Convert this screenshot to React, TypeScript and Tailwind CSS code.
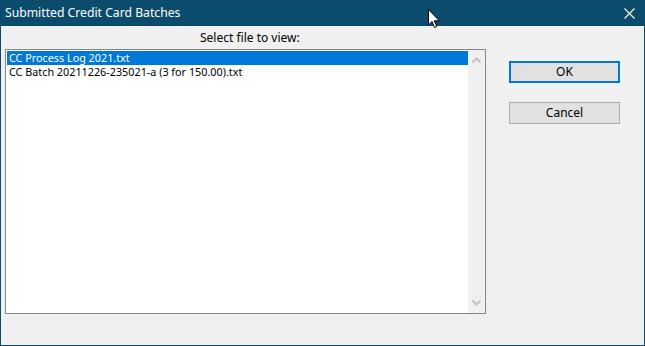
import React from "react";

const files = [
  "CC Process Log 2021.txt",
  "CC Batch 20211226-235021-a (3 for 150.00).txt",
];

function Chevron({ up }: { up?: boolean }) {
  return (
    <svg width="9" height="6" viewBox="0 0 9 6" className="block">
      <path
        d={up ? "M0.5 5.5 L4.5 1.5 L8.5 5.5" : "M0.5 0.5 L4.5 4.5 L8.5 0.5"}
        fill="none"
        stroke="#c2c2c2"
        strokeWidth="2"
      />
    </svg>
  );
}

export default function App() {
  const selected = 0;
  return (
    <div
      className="relative w-[645px] h-[346px] border border-[#0b4b6c] bg-[#f0f0f0] flex flex-col text-[12px] text-black overflow-hidden"
      style={{ fontFamily: '"Noto Sans", "Segoe UI", sans-serif' }}
    >
      {/* title bar */}
      <div className="h-[25px] shrink-0 bg-[#0b4b6c] flex items-center justify-between pl-[4px] pr-[9px] text-white">
        <span className="leading-none text-[12.2px]">Submitted Credit Card Batches</span>
        <svg width="11" height="11" viewBox="0 0 11 11">
          <path d="M0.5 0.5 L10.5 10.5 M10.5 0.5 L0.5 10.5" stroke="#fff" strokeWidth="1.1" />
        </svg>
      </div>

      <div className="flex flex-1">
        {/* left: label + list */}
        <div className="flex flex-col pl-[4px] pt-[3px]">
          <div className="pl-[195px] h-[17px] leading-[17px]">Select file to view:</div>
          <div className="mt-[3px] w-[481px] h-[265px] border border-[#828790] bg-white flex">
            <div className="flex-1 pt-[1px] pl-[1px]">
              {files.map((f, i) => (
                <div
                  key={f}
                  className={`h-[14px] leading-[14px] text-[10.8px] pl-[2px] whitespace-nowrap ${
                    i === selected ? "bg-[#0078d7] text-white" : ""
                  }`}
                >
                  {f}
                </div>
              ))}
            </div>
            <div className="w-[17px] bg-[#f0f0f0] flex flex-col items-center justify-between py-[7px]">
              <Chevron up />
              <Chevron />
            </div>
          </div>
        </div>

        {/* right: buttons */}
        <div className="flex flex-col pl-[23px] pt-[35px] gap-[19px]">
          <button className="w-[111px] h-[22px] border-2 border-[#0078d7] bg-[#e1e1e1] leading-none">
            OK
          </button>
          <button className="w-[111px] h-[22px] border border-[#adadad] bg-[#e1e1e1] leading-none">
            Cancel
          </button>
        </div>
      </div>

      {/* mouse cursor */}
      <svg
        className="absolute left-[427px] top-[8px]"
        width="13"
        height="20"
        viewBox="0 0 13 20"
      >
        <path
          d="M0.5 0.5 L0.5 16 L4 12.5 L6.5 18.5 L8.8 17.5 L6.3 11.8 L11.3 11.8 Z"
          fill="#fff"
          stroke="#000"
          strokeWidth="1"
        />
      </svg>
    </div>
  );
}
